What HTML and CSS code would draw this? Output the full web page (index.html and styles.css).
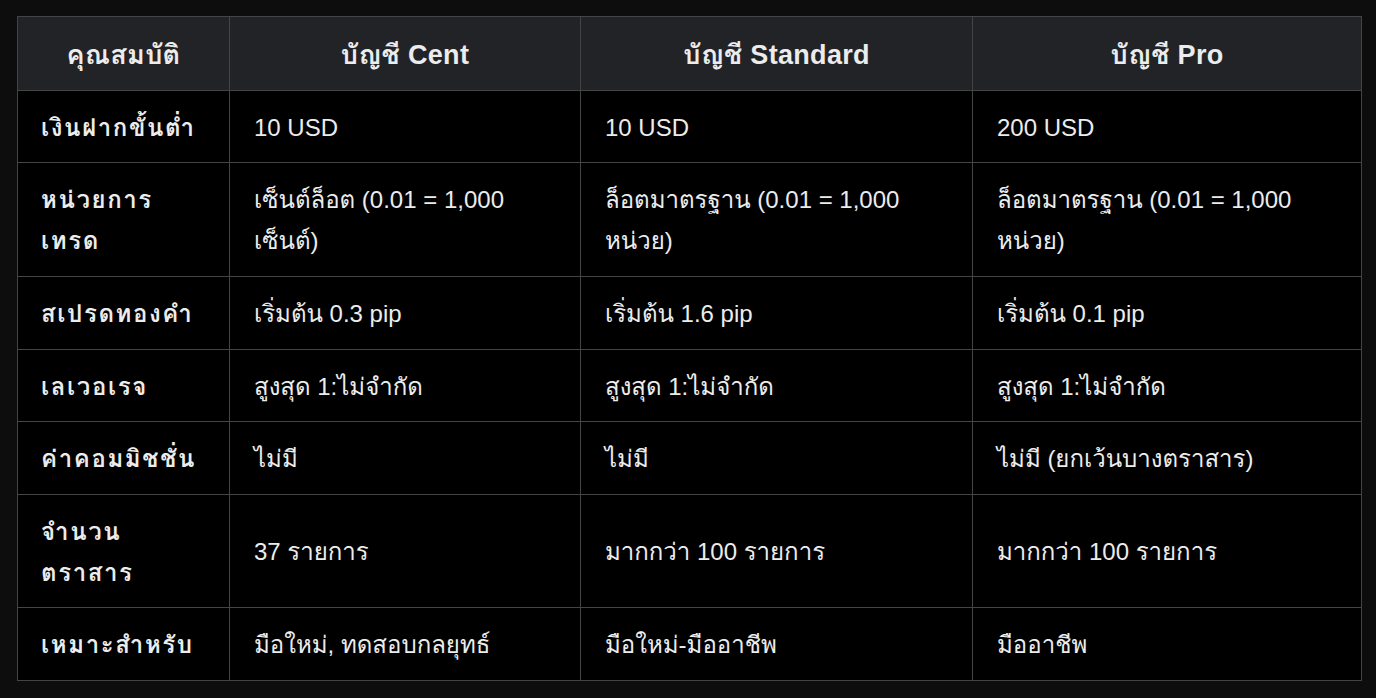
FILE: index.html
```html
<!DOCTYPE html>
<html lang="th">
<head>
<meta charset="utf-8">
<link rel="stylesheet" href="styles.css">
</head>
<body>
<div class="wrap">
<table class="cmp">
<colgroup>
<col class="c1"><col class="c2"><col class="c3"><col class="c4">
</colgroup>
<thead>
<tr><th>คุณสมบัติ</th><th>บัญชี Cent</th><th>บัญชี Standard</th><th>บัญชี Pro</th></tr>
</thead>
<tbody>
<tr><td class="k">เงินฝากขั้นต่ำ</td><td>10 USD</td><td>10 USD</td><td>200 USD</td></tr>
<tr><td class="k">หน่วยการ เทรด</td><td>เซ็นต์ล็อต (0.01 = 1,000 <span class="nw">เซ็นต์)</span></td><td>ล็อตมาตรฐาน (0.01 = 1,000 <span class="nw">หน่วย)</span></td><td>ล็อตมาตรฐาน (0.01 = 1,000 <span class="nw">หน่วย)</span></td></tr>
<tr><td class="k">สเปรดทองคำ</td><td>เริ่มต้น 0.3 pip</td><td>เริ่มต้น 1.6 pip</td><td>เริ่มต้น 0.1 pip</td></tr>
<tr><td class="k">เลเวอเรจ</td><td>สูงสุด 1:ไม่จำกัด</td><td>สูงสุด 1:ไม่จำกัด</td><td>สูงสุด 1:ไม่จำกัด</td></tr>
<tr><td class="k">ค่าคอมมิชชั่น</td><td>ไม่มี</td><td>ไม่มี</td><td>ไม่มี (ยกเว้นบางตราสาร)</td></tr>
<tr><td class="k">จำนวน ตราสาร</td><td>37 รายการ</td><td>มากกว่า 100 รายการ</td><td>มากกว่า 100 รายการ</td></tr>
<tr><td class="k">เหมาะสำหรับ</td><td>มือใหม่, ทดสอบกลยุทธ์</td><td>มือใหม่-มืออาชีพ</td><td>มืออาชีพ</td></tr>
</tbody>
</table>
</div>
</body>
</html>
```
FILE: styles.css
```css
html, body {
  margin: 0;
  padding: 0;
  background: #0d0d0d;
}
.wrap {
  padding: 16px 0 0 17px;
}
.cmp {
  border-collapse: collapse;
  table-layout: fixed;
  width: 1344px;
  font-family: "Liberation Sans", "Loma", sans-serif;
  font-size: 24px;
  line-height: 40.7px;
  color: #ececec;
  background: #000;
}
.c1 { width: 212px; }
.c2 { width: 351px; }
.c3 { width: 392px; }
.c4 { width: 389px; }
.cmp th, .cmp td {
  border: 1px solid #444;
  padding: 17px 24px 14px;
  text-align: left;
  vertical-align: middle;
}
.cmp th {
  background: #212327;
  font-weight: bold;
  font-size: 27px;
  letter-spacing: 0.3px;
  text-align: center;
  padding: 17.5px 20px 14.5px;
}
.cmp td.k {
  font-weight: bold;
  letter-spacing: 1.6px;
  padding-left: 23px;
}
.nw {
  white-space: nowrap;
}
```
